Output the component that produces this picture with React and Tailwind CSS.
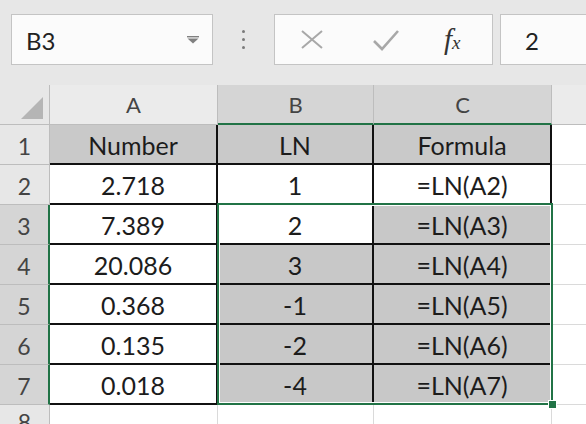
import React from "react";

const rows = [
  { n: 1, a: "Number", b: "LN", c: "Formula" },
  { n: 2, a: "2.718", b: "1", c: "=LN(A2)" },
  { n: 3, a: "7.389", b: "2", c: "=LN(A3)" },
  { n: 4, a: "20.086", b: "3", c: "=LN(A4)" },
  { n: 5, a: "0.368", b: "-1", c: "=LN(A5)" },
  { n: 6, a: "0.135", b: "-2", c: "=LN(A6)" },
  { n: 7, a: "0.018", b: "-4", c: "=LN(A7)" },
];

function Toolbar() {
  return (
    <div className="h-[85px] bg-[#e7e7e7] flex items-start pt-[14px] pl-[11px]">
      {/* name box */}
      <div className="w-[202px] h-[51px] bg-[#fbfbfb] border border-[#c4c4c4] flex items-center justify-between pl-[14px] pr-[13px]">
        <span className="text-[24px] text-[#222] pt-[2px]">B3</span>
        <svg width="12" height="8" viewBox="0 0 12 8">
          <rect x="0" y="0" width="12" height="1.4" fill="#808080" />
          <path d="M0.5 2.4 L11.5 2.4 L6 7.6 Z" fill="#808080" />
        </svg>
      </div>
      <div className="w-[61px] h-[51px] flex flex-col items-center justify-center gap-[5px]">
        <span className="w-[3px] h-[3px] rounded-full bg-[#7a7a7a]" />
        <span className="w-[3px] h-[3px] rounded-full bg-[#7a7a7a]" />
        <span className="w-[3px] h-[3px] rounded-full bg-[#7a7a7a]" />
      </div>
      {/* formula buttons */}
      <div className="w-[219px] h-[51px] bg-[#fbfbfb] border border-[#c4c4c4] flex items-center">
        <svg width="22" height="19" viewBox="0 0 22 19" className="ml-[26px]">
          <path d="M1 1 L21 18 M21 1 L1 18" stroke="#a8a8a8" strokeWidth="2" fill="none" />
        </svg>
        <svg width="26" height="22" viewBox="0 0 26 22" className="ml-[50px]">
          <path d="M1 12 L9 20 L25 2" stroke="#a8a8a8" strokeWidth="2.6" fill="none" />
        </svg>
        <span className="ml-[45px] text-[#333] font-['Liberation_Serif',serif] italic leading-none">
          <span className="text-[29px]">f</span>
          <span className="text-[19px]">x</span>
        </span>
      </div>
      <div className="ml-[7px] flex-1 h-[51px] bg-[#fbfbfb] border border-r-0 border-[#c4c4c4] flex items-center pl-[24px]">
        <span className="text-[24px] text-[#222] pt-[2px]">2</span>
      </div>
    </div>
  );
}

function cellFill(r, col) {
  if (r.n === 1) return "bg-[#c9c9c9]";
  if (col === "a" || r.n === 2) return "bg-white";
  if (col === "b" && r.n === 3) return "bg-white";
  return "bg-[#c8c8c8]";
}

export default function App() {
  return (
    <div className="w-[586px] h-[424px] overflow-hidden bg-white font-['Lato',sans-serif] text-[#1c1c1c]">
      <Toolbar />
      <div className="relative grid grid-cols-[50px_168px_156px_178px_1fr] grid-rows-[40px_repeat(8,40px)]">
        {/* column headers */}
        <div className="bg-[#e7e7e7] border-r border-b border-[#bdbdbd] flex items-end justify-end pr-[6px] pb-[5px]">
          <svg width="22" height="22" viewBox="0 0 22 22">
            <path d="M22 0 L22 22 L0 22 Z" fill="#b5b5b5" />
          </svg>
        </div>
        <div className="bg-[#ebebeb] border-r border-b border-[#bdbdbd] flex items-center justify-center text-[22px] text-[#444]">A</div>
        <div className="bg-[#d5d5d5] border-r border-[#bdbdbd] border-b-2 border-b-[#217346] flex items-center justify-center text-[22px] text-[#444]">B</div>
        <div className="bg-[#d5d5d5] border-r border-[#bdbdbd] border-b-2 border-b-[#217346] flex items-center justify-center text-[22px] text-[#444]">C</div>
        <div className="bg-[#ebebeb] border-b border-[#bdbdbd]" />

        {rows.map((r) => {
          const sel = r.n >= 3;
          return (
            <React.Fragment key={r.n}>
              <div
                className={
                  sel
                    ? "bg-[#d5d5d5] border-b border-[#bdbdbd] border-r-2 border-r-[#217346] flex items-center justify-center text-[23px] text-[#444] pt-[3px]"
                    : "bg-[#e7e7e7] border-b border-r border-[#bdbdbd] flex items-center justify-center text-[23px] text-[#444] pt-[3px]"
                }
              >
                {r.n}
              </div>
              <div className={`${cellFill(r, "a")} border-r-2 border-b-2 border-[#111] flex items-center justify-center text-[25px] pt-[3px]`}>{r.a}</div>
              <div className={`${cellFill(r, "b")} border-r-2 border-b-2 border-[#111] flex items-center justify-center text-[25px] pt-[3px]`}>{r.b}</div>
              <div className={`${cellFill(r, "c")} border-r-2 border-b-2 border-[#111] flex items-center justify-center text-[25px] pt-[3px]`}>{r.c}</div>
              <div className="bg-white border-b border-[#dadada]" />
            </React.Fragment>
          );
        })}

        {/* row 8 */}
        <div className="bg-[#e7e7e7] border-r border-[#bdbdbd] flex items-start justify-center text-[23px] leading-none text-[#444] pt-[6px]">8</div>
        <div className="bg-white border-r border-[#dadada]" />
        <div className="bg-white border-r border-[#dadada]" />
        <div className="bg-white border-r border-[#dadada]" />
        <div className="bg-white" />

        {/* selection B3:C7 */}
        <div className="absolute left-[217px] top-[118px] w-[336px] h-[202px] border-2 border-[#217346] shadow-[inset_0_0_0_1px_#ffffff] pointer-events-none" />
        <div className="absolute left-[548px] top-[315px] w-[9px] h-[9px] bg-[#217346] border border-white" />
      </div>
    </div>
  );
}
